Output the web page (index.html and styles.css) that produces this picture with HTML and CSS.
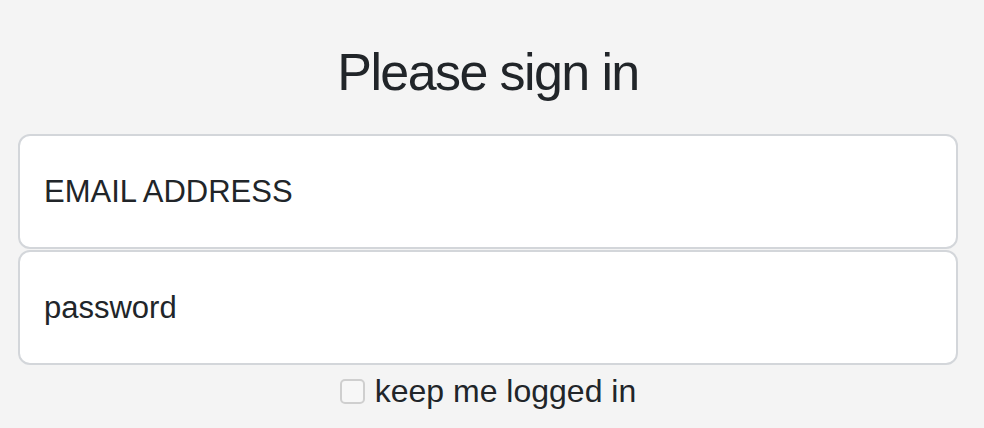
FILE: index.html
```html
<!DOCTYPE html>
<html lang="en">
<head>
  <meta charset="UTF-8" />
  <title>Sign in</title>
  <meta name="viewport" content="width=device-width, initial-scale=1" />
  <link rel="stylesheet" href="styles.css">
</head>
<body>
  <main class="signin">
    <h1 class="titulo">Please sign in</h1>
    <form class="signin-form" autocomplete="on">
      <input type="email" class="campo" placeholder="EMAIL ADDRESS" autocomplete="username">
      <input type="password" class="campo" placeholder="password" autocomplete="current-password">
      <label class="lembrar">
        <input type="checkbox" class="lembrar-box">
        <span>keep me logged in</span>
      </label>
    </form>
  </main>
</body>
</html>
```

FILE: styles.css
```css
body {
  background: #f4f4f4;
  margin: 0;
  font-family: 'Liberation Sans', Arial, sans-serif;
  color: #212529;
}
.signin {
  padding: 42px 26px 0 18px;
}
.titulo {
  margin: 0 0 32px 0;
  text-align: center;
  font-size: 52px;
  line-height: 60px;
  font-weight: 400;
  letter-spacing: -1.6px;
}
.signin-form {
  display: flex;
  flex-direction: column;
  gap: 1px;
}
.campo {
  height: 115px;
  box-sizing: border-box;
  padding: 0 24px;
  border: 2px solid #d3d6da;
  border-radius: 12px;
  background: #fff;
  font-family: inherit;
  font-size: 31px;
  color: #212529;
  outline: none;
}
.campo::placeholder {
  color: #212529;
  opacity: 1;
}
.lembrar {
  display: flex;
  align-items: center;
  justify-content: center;
  gap: 10px;
  margin-top: 7px;
  font-size: 32px;
  line-height: 36px;
}
.lembrar-box {
  appearance: none;
  margin: 0;
  width: 25px;
  height: 25px;
  border: 2px solid #cfcfcf;
  border-radius: 5px;
  background: #f7f7f7;
}
```
